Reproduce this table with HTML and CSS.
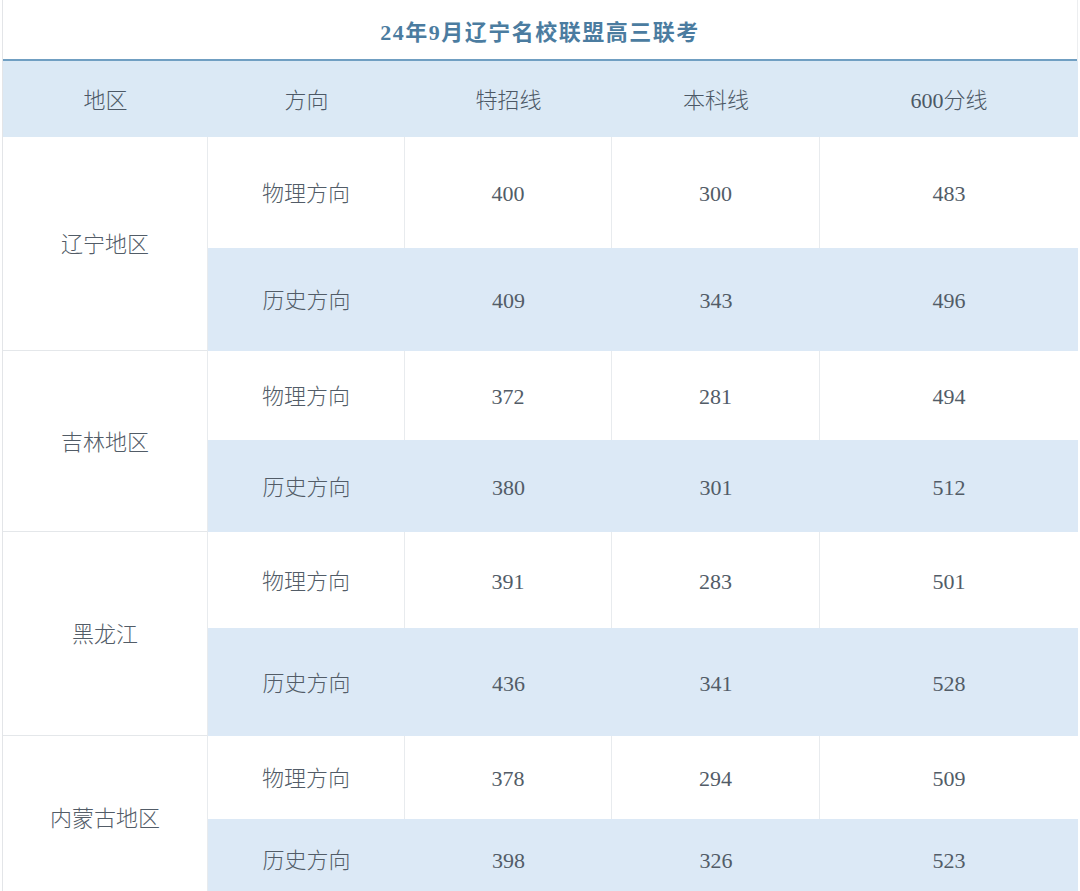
FILE: index.html
```html
<!DOCTYPE html>
<html lang="zh-CN">
<head>
<meta charset="utf-8">
<title>24年9月辽宁名校联盟高三联考</title>
<link rel="stylesheet" href="styles.css">
</head>
<body>
<div class="sheet">
  <div class="title">24年9月辽宁名校联盟高三联考</div>
  <table class="grid">
    <colgroup>
      <col class="c1"><col class="c2"><col class="c3"><col class="c4"><col class="c5">
    </colgroup>
    <thead>
      <tr class="head">
        <th>地区</th><th>方向</th><th>特招线</th><th>本科线</th><th>600分线</th>
      </tr>
    </thead>
    <tbody>
      <tr class="phys r-l1">
        <td class="region" rowspan="2">辽宁地区</td>
        <td>物理方向</td><td>400</td><td>300</td><td>483</td>
      </tr>
      <tr class="hist r-l2">
        <td>历史方向</td><td>409</td><td>343</td><td>496</td>
      </tr>
      <tr class="phys r-j1">
        <td class="region" rowspan="2">吉林地区</td>
        <td>物理方向</td><td>372</td><td>281</td><td>494</td>
      </tr>
      <tr class="hist r-j2">
        <td>历史方向</td><td>380</td><td>301</td><td>512</td>
      </tr>
      <tr class="phys r-h1">
        <td class="region" rowspan="2">黑龙江</td>
        <td>物理方向</td><td>391</td><td>283</td><td>501</td>
      </tr>
      <tr class="hist r-h2">
        <td>历史方向</td><td>436</td><td>341</td><td>528</td>
      </tr>
      <tr class="phys r-n1">
        <td class="region" rowspan="2">内蒙古地区</td>
        <td>物理方向</td><td>378</td><td>294</td><td>509</td>
      </tr>
      <tr class="hist r-n2">
        <td>历史方向</td><td>398</td><td>326</td><td>523</td>
      </tr>
    </tbody>
  </table>
</div>
</body>
</html>
```

FILE: styles.css
```css
html, body {
  margin: 0;
  padding: 0;
  background: #ffffff;
}

body {
  font-family: "Liberation Serif", "Noto Sans CJK SC", serif;
  color: #525c67;
  height: 891px;
  overflow: hidden;
}

.sheet {
  width: 1076px;
  margin-left: 2px;
  border-left: 1px solid #e3e5e8;
  border-right: 1px solid #eceef0;
  box-sizing: border-box;
}

.title {
  height: 61px;
  box-sizing: border-box;
  padding-top: 19px;
  text-align: center;
  font-weight: bold;
  font-size: 22px;
  letter-spacing: 1.5px;
  line-height: 28px;
  color: #4b7ca0;
  border-bottom: 2px solid #709fc2;
}

.grid {
  width: 1075px;
  table-layout: fixed;
  border-collapse: separate;
  border-spacing: 0;
  font-size: 22px;
}

.c1 { width: 205px; }
.c2 { width: 197px; }
.c3 { width: 207px; }
.c4 { width: 208px; }
.c5 { width: 258px; }

th, td {
  padding: 3px 0 0;
  box-sizing: border-box;
  text-align: center;
  vertical-align: middle;
  font-weight: 300;
  line-height: 28px;
}

.head th {
  height: 76px;
  background: #dbe9f5;
  color: #4c5865;
}

.phys td {
  background: #ffffff;
  border-right: 1px solid #e8ebee;
}

.phys td:last-child,
.hist td:last-child {
  border-right: none;
}

.hist td {
  background: #dce9f6;
}

.phys td.region {
  border-bottom: 1px solid #e4e7ea;
}

.r-l1 td { height: 111px; }
.r-l2 td { height: 103px; }
.r-j1 td { height: 89px; }
.r-j2 td { height: 92px; }
.r-h1 td { height: 96px; }
.r-h2 td { height: 108px; }
.r-n1 td { height: 83px; }
.r-n2 td { height: 80px; }

td.region {
  height: auto !important;
}
```
